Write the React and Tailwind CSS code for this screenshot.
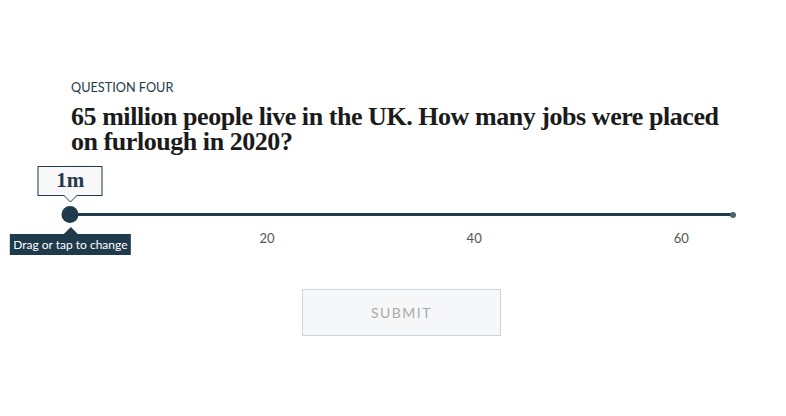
import React from "react";

const MIN = 0;
const MAX = 65;
const WIDTH = 673;
const pos = (v) => ((v - MIN) / (MAX - MIN)) * WIDTH;

function Slider({ value }) {
  const x = pos(value);
  return (
    <div className="relative ml-[60px] w-[673px] flex flex-col pt-[53px]">
      {/* track row */}
      <div className="flex items-center h-[3px]">
        <div className="h-[3px] shrink-0" style={{ width: x }} />
        <div className="h-[3px] flex-1 bg-[#1f3a4a]" />
        <div className="w-[6px] h-[6px] -mr-[3px] -ml-[3px] rounded-full bg-[#4a6272]" />
      </div>

      {/* scale labels */}
      <div className="relative h-[30px] mt-[14px] font-[Lato,sans-serif] text-[13px] leading-[16px] text-[#555]">
        {[20, 40, 60].map((v) => (
          <span key={v} className="absolute top-0 -translate-x-1/2" style={{ left: pos(v) }}>
            {v}
          </span>
        ))}
      </div>

      {/* value tooltip (overlay) */}
      <div className="absolute top-[6px] -translate-x-1/2 flex flex-col items-center" style={{ left: x }}>
        <div className="w-[65px] h-[30px] border border-[#1f3a4a] bg-[#f8f8f8] flex items-center justify-center font-['Liberation_Serif',serif] text-[21px] font-bold text-[#1f3a4a]">
          1m
        </div>
        <svg width="14" height="8" viewBox="0 0 14 8" className="-mt-[1px]">
          <path d="M0 0 L7 7 L14 0" fill="#f8f8f8" stroke="#1f3a4a" strokeWidth="1" />
        </svg>
      </div>

      {/* thumb (overlay) */}
      <div
        className="absolute top-[46px] w-[17px] h-[17px] -translate-x-1/2 rounded-full bg-[#1f3a4a]"
        style={{ left: x }}
      />

      {/* hint (overlay) */}
      <div className="absolute top-[67px] -translate-x-1/2 flex flex-col items-center" style={{ left: x }}>
        <svg width="14" height="7" viewBox="0 0 14 7">
          <path d="M0 7 L7 0 L14 7 Z" fill="#1f3a4a" />
        </svg>
        <div className="h-[21px] px-[3px] bg-[#1f3a4a] text-white font-[Lato,sans-serif] text-[12px] leading-[21px] whitespace-nowrap">
          Drag or tap to change
        </div>
      </div>
    </div>
  );
}

export default function App() {
  return (
    <div className="w-[786px] h-[416px] bg-white overflow-hidden flex flex-col">
      <div className="pl-[71px] pt-[79px] flex flex-col gap-[9px]">
        <div className="font-[Lato,sans-serif] text-[12.7px] leading-[16px] text-[#243a47]">
          QUESTION FOUR
        </div>
        <h1 className="font-['Liberation_Serif',serif] text-[26px] leading-[25px] tracking-[-0.45px] font-bold text-[#1b1b1b] w-[680px]">
          65 million people live in the UK. How many jobs were placed on furlough in 2020?
        </h1>
      </div>

      <div className="mt-[6px]">
        <Slider value={1} />
      </div>

      <div className="flex justify-center pl-[17px] mt-[29px]">
        <button className="w-[199px] h-[47px] border border-[#d3d3d3] bg-[#f6f7f8] text-[#a9a9a9] font-[Lato,sans-serif] text-[14px] tracking-[1.5px]">
          SUBMIT
        </button>
      </div>
    </div>
  );
}
